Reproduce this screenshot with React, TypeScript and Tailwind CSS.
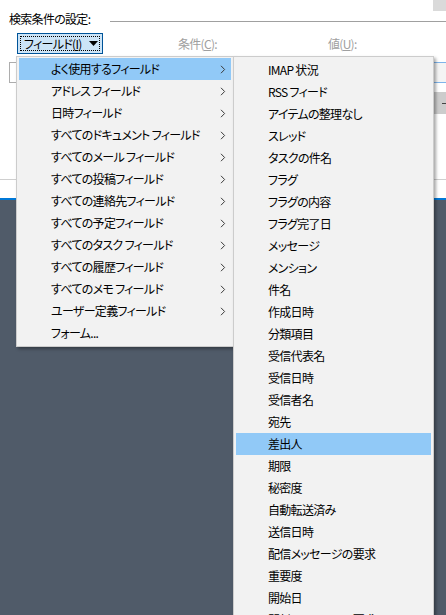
import React from "react";

const mainItems: { label: string; sub: boolean; active?: boolean }[] = [
  { label: "よく使用するフィールド", sub: true, active: true },
  { label: "アドレス フィールド", sub: true },
  { label: "日時フィールド", sub: true },
  { label: "すべてのドキュメント フィールド", sub: true },
  { label: "すべてのメール フィールド", sub: true },
  { label: "すべての投稿フィールド", sub: true },
  { label: "すべての連絡先フィールド", sub: true },
  { label: "すべての予定フィールド", sub: true },
  { label: "すべてのタスク フィールド", sub: true },
  { label: "すべての履歴フィールド", sub: true },
  { label: "すべてのメモ フィールド", sub: true },
  { label: "ユーザー定義フィールド", sub: true },
  { label: "フォーム...", sub: false },
];

const subItems = [
  "IMAP 状況",
  "RSS フィード",
  "アイテムの整理なし",
  "スレッド",
  "タスクの件名",
  "フラグ",
  "フラグの内容",
  "フラグ完了日",
  "メッセージ",
  "メンション",
  "件名",
  "作成日時",
  "分類項目",
  "受信代表名",
  "受信日時",
  "受信者名",
  "宛先",
  "差出人",
  "期限",
  "秘密度",
  "自動転送済み",
  "送信日時",
  "配信メッセージの要求",
  "重要度",
  "開始日",
  "開封メッセージの要求",
];

function Chevron() {
  return (
    <svg width="6" height="9" viewBox="0 0 6 9" className="shrink-0">
      <path d="M1 0.8 L4.6 4.5 L1 8.2" fill="none" stroke="#3a3a3a" strokeWidth="1" />
    </svg>
  );
}

export default function App() {
  return (
    <div className="relative w-[446px] h-[615px] overflow-hidden bg-[#505b69] font-['Noto_Sans_CJK_JP','Noto_Sans',sans-serif] [font-feature-settings:'palt'] tracking-[-0.7px] text-[12px] text-black">
      {/* dialog */}
      <div className="bg-white h-[198px] flex flex-col">
        <div className="flex justify-end h-[11px]">
          <div className="w-[13px] bg-[#dadada]" />
        </div>
        <div className="flex items-start h-[16px] pl-[9px]">
          <span className="leading-[16px] whitespace-nowrap">検索条件の設定:</span>
          <div className="flex-1 ml-[20px] mt-[10px] h-px bg-[#a0a0a0]" />
        </div>
        <div className="flex items-center mt-[6px] h-[21px]">
          <div className="ml-[17px] w-[86px] h-[21px] border border-[#005499] bg-[#cce4f7] p-[2px]">
            <div className="h-full border border-dotted border-black flex items-center pl-[3px] pr-[1px]">
              <span className="leading-[15px] whitespace-nowrap">
                フィールド(<span className="underline">I</span>)
              </span>
              <svg width="9" height="5" viewBox="0 0 9 5" className="ml-auto shrink-0">
                <path d="M0 0 H9 L4.5 5 Z" fill="#000" />
              </svg>
            </div>
          </div>
          <div className="ml-[75px] w-[150px] text-[#a0a0a0] whitespace-nowrap">
            条件(<span className="underline">C</span>):
          </div>
          <div className="text-[#a0a0a0] whitespace-nowrap">
            値(<span className="underline">U</span>):
          </div>
        </div>
        <div className="flex mt-[8px] h-[21px]">
          <div className="ml-[9px] w-[305px] border border-[#adadad] bg-white" />
          <div className="ml-[14px] flex-1 border-y border-l border-[#7eb4ea] bg-[#f4f4f4]" />
        </div>
        <div className="flex justify-end mt-[9px]">
          <div className="w-[30px] h-[22px] bg-[#cccccc] flex items-center pl-[26px]">
            <div className="w-[4px] h-px bg-[#444]" />
          </div>
        </div>
        <div className="flex-1" />
        <div className="h-px bg-[#cfcfcf]" />
        <div className="h-[18px]" />
      </div>
      <div className="h-[2px] bg-[#0078d7]" />

      {/* main menu */}
      <div className="absolute left-[16px] top-[56px] w-[218px] bg-[#f2f2f2] border border-[#cccccc] pt-[1px] pb-[2px] shadow-[2px_2px_3px_rgba(0,0,0,0.35)]">
        {mainItems.map((it) => (
          <div
            key={it.label}
            className={`mx-[2px] h-[22px] flex items-center pl-[32px] pr-[5px] whitespace-nowrap ${
              it.active ? "bg-[#91c9f7]" : ""
            }`}
          >
            <span className="leading-[22px]">{it.label}</span>
            <span className="flex-1" />
            {it.sub && <Chevron />}
          </div>
        ))}
      </div>

      {/* submenu */}
      <div className="absolute left-[233px] top-[56px] w-[201px] bg-[#f2f2f2] border border-[#cccccc] pt-[2px] pb-[2px] shadow-[2px_2px_3px_rgba(0,0,0,0.35)]">
        {subItems.map((s) => (
          <div
            key={s}
            className={`mx-[2px] h-[22px] flex items-center pl-[32px] whitespace-nowrap ${
              s === "差出人" ? "bg-[#91c9f7]" : ""
            }`}
          >
            <span className="leading-[22px]">{s}</span>
          </div>
        ))}
      </div>
    </div>
  );
}
